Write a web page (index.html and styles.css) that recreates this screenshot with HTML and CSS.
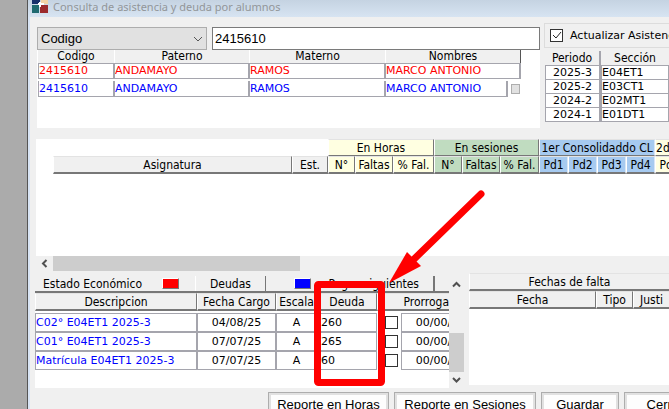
FILE: index.html
```html
<!DOCTYPE html>
<html lang="es">
<head>
<meta charset="utf-8">
<title>Consulta de asistencia y deuda por alumnos</title>
<link rel="stylesheet" href="styles.css">
</head>
<body>
<main class="window">
  <header class="titlebar">
    <svg class="logo" width="17" height="16" viewBox="0 0 17 16" aria-hidden="true">
      <path fill="#17306b" d="M0 0h8v7H0z"/><path fill="#f3d3a6" d="M9 0h7v7H9z"/>
      <path fill="#1f6a70" d="M0 8h7v8H0z"/><path fill="#9c2a2c" d="M8 8h8v8H8z"/>
      <path fill="#fff" d="M6 6h6v2H6zM7 5h2v5H7z"/>
    </svg>
    <h1>Consulta de asistencia y deuda por alumnos</h1>
  </header>

  <section class="top">
    <div class="students">
      <div class="search">
        <select class="combo" aria-label="Buscar por"><option>Codigo</option></select>
        <input class="query" type="text" value="2415610" aria-label="Valor">
      </div>
      <div class="student-list">
        <table class="student-table">
          <colgroup><col class="w77"><col class="w135"><col class="w136"><col class="w122"><col class="w13"></colgroup>
          <thead><tr><th>Codigo</th><th>Paterno</th><th>Materno</th><th colspan="2" class="last">Nombres</th></tr></thead>
          <tbody>
            <tr class="red"><td>2415610</td><td>ANDAMAYO</td><td>RAMOS</td><td colspan="2">MARCO ANTONIO</td></tr>
            <tr class="gap"><td colspan="5"></td></tr>
            <tr class="blue"><td>2415610</td><td>ANDAMAYO</td><td>RAMOS</td><td>MARCO ANTONIO</td><td class="pick"><button class="mini" type="button" aria-label="Elegir"></button></td></tr>
          </tbody>
        </table>
      </div>
    </div>
    <div class="periods">
      <label class="refresh"><input class="check" type="checkbox" checked>Actualizar Asistencia</label>
      <table class="period-table">
        <colgroup><col class="w56"><col class="w68"></colgroup>
        <thead><tr><th>Periodo</th><th>Sección</th></tr></thead>
        <tbody>
          <tr><td>2025-3</td><td>E04ET1</td></tr>
          <tr><td>2025-2</td><td>E03CT1</td></tr>
          <tr><td>2024-2</td><td>E02MT1</td></tr>
          <tr><td>2024-1</td><td>E01DT1</td></tr>
        </tbody>
      </table>
    </div>
  </section>

  <section class="courses">
    <div class="course-list">
      <table class="course-table">
        <colgroup><col class="w17"><col class="w239"><col class="w36"><col class="w27"><col class="w38"><col class="w41"><col class="w28"><col class="w38"><col class="w39"><col class="w29"><col class="w29"><col class="w29"><col class="w29"><col class="w29"></colgroup>
        <thead>
          <tr><td colspan="3"></td><th colspan="3" class="cream">En Horas</th><th colspan="3" class="green">En sesiones</th><th colspan="4" class="sky">1er Consolidaddo CL</th><th class="cream start">2do</th></tr>
          <tr><td></td><th>Asignatura</th><th>Est.</th><th class="cream">N°</th><th class="cream">Faltas</th><th class="cream">% Fal.</th><th class="green">N°</th><th class="green">Faltas</th><th class="green">% Fal.</th><th class="sky">Pd1</th><th class="sky">Pd2</th><th class="sky">Pd3</th><th class="sky">Pd4</th><th class="cream">Pd1</th></tr>
        </thead>
      </table>
    </div>
    <div class="hscroll">
      <svg width="17" height="15" viewBox="0 0 17 15" aria-hidden="true"><path d="M10.500 4L7 7.500L10.500 11" fill="none" stroke="#505050" stroke-width="2"/></svg>
      <div class="hthumb"></div>
    </div>
  </section>

  <section class="bottom">
    <div class="debts">
      <div class="debt-list">
        <div class="legend">
          <div class="legend-state">Estado Económico<span class="swatch swatch-red"></span></div>
          <div class="legend-debt">Deudas</div>
          <div class="legend-next"><span class="swatch swatch-blue"></span>Pagos siguientes</div>
          <div class="legend-rest"></div>
        </div>
        <table class="debt-table">
          <colgroup><col class="w162"><col class="w79"><col class="w41"><col class="w60"><col class="w24"><col class="w79"></colgroup>
          <thead><tr><th>Descripcion</th><th>Fecha Cargo</th><th>Escala</th><th>Deuda</th><th colspan="2">Prorrogar</th></tr></thead>
          <tbody>
            <tr><td class="desc">C02° E04ET1 2025-3</td><td>04/08/25</td><td>A</td><td class="amount">260</td><td class="tick"><input class="check" type="checkbox" aria-label="Prorrogar C02°"></td><td>00/00/00</td></tr>
            <tr><td class="desc">C01° E04ET1 2025-3</td><td>07/07/25</td><td>A</td><td class="amount">265</td><td class="tick"><input class="check" type="checkbox" aria-label="Prorrogar C01°"></td><td>00/00/00</td></tr>
            <tr><td class="desc">Matrícula E04ET1 2025-3</td><td>07/07/25</td><td>A</td><td class="amount">60</td><td class="tick"><input class="check" type="checkbox" aria-label="Prorrogar matrícula"></td><td>00/00/00</td></tr>
          </tbody>
        </table>
      </div>
      <div class="vscroll">
        <svg width="15" height="16" viewBox="0 0 15 16" aria-hidden="true"><path d="M4 10.500L7.500 7L11 10.500" fill="none" stroke="#505050" stroke-width="2"/></svg>
        <div class="vthumb"></div>
        <svg width="15" height="16" viewBox="0 0 15 16" aria-hidden="true"><path d="M4 6L7.500 9.500L11 6" fill="none" stroke="#505050" stroke-width="2"/></svg>
      </div>
      <svg class="marker" width="175" height="200" viewBox="0 0 175 200" aria-hidden="true">
        <rect x="7.500" y="94.500" width="64" height="98" rx="1" fill="none" stroke="#f00" stroke-width="7"/>
        <path d="M171 4L99 74" stroke="#f00" stroke-width="7" stroke-linecap="round"/>
        <path d="M79 93L97 62L111 76Z" fill="#f00"/>
      </svg>
    </div>
    <div class="absences">
      <table class="absence-table">
        <colgroup><col class="w127"><col class="w37"><col class="w37"></colgroup>
        <thead>
          <tr><th colspan="3">Fechas de falta</th></tr>
          <tr><th>Fecha</th><th>Tipo</th><th>Justi</th></tr>
        </thead>
      </table>
    </div>
  </section>

  <footer class="actions">
    <button class="action hours" type="button">Reporte en Horas</button>
    <button class="action sessions" type="button">Reporte en Sesiones</button>
    <button class="action save" type="button">Guardar</button>
    <button class="action close" type="button"><u>C</u>errar</button>
  </footer>
</main>
</body>
</html>
```

FILE: styles.css
```css
* { box-sizing: border-box; }

body {
  margin: 0;
  height: 100vh;
  padding-left: 27px;
  overflow: hidden;
  background: #ababab;
  color: #000;
  font: 12px/14px "DejaVu Sans Condensed", "DejaVu Sans", sans-serif;
}

.window {
  min-height: 100%;
  border-left: 1px solid #555;
  background: #f0f0f0;
  box-shadow: inset 2px 0 #d8e4f4;
  overflow: hidden;
}

.titlebar {
  display: flex;
  align-items: flex-start;
  gap: 4px;
  height: 17px;
  padding-left: 4px;
  background: linear-gradient(#c5d3e2, #d7e4f2);
}
.logo { margin-top: -3px; }
.titlebar h1 {
  margin: 0;
  color: #929699;
  font: 11px/14px "Noto Sans", "Open Sans", sans-serif;
}

table {
  border-collapse: separate;
  border-spacing: 0;
  table-layout: fixed;
}
th, td { padding: 0; overflow: hidden; white-space: nowrap; }
th {
  font-weight: normal;
  text-align: center;
  background: #f0f0f0;
}
td { font-family: "DejaVu Sans", sans-serif; }

/* Student search */
.top { display: flex; gap: 4px; padding: 6px 0 0 9px; }
.students { flex: none; width: 503px; padding-top: 4px; }
.search { display: flex; gap: 5px; height: 23px; }
.combo, .query {
  height: 23px;
  margin: 0;
  color: #000;
  font: 13px/18px "Liberation Sans", sans-serif;
  border: 1px solid #7a7a7a;
  border-radius: 0;
}
.combo {
  width: 170px;
  padding: 0 3px;
  appearance: none;
  border-color: #adadad;
  background: #e1e1e1 url("data:image/svg+xml,%3Csvg xmlns='http://www.w3.org/2000/svg' width='10' height='6'%3E%3Cpath d='M1 1l4 4 4-4' fill='none' stroke='%23555'/%3E%3C/svg%3E") right 3px center no-repeat;
}
.query { flex: 1; min-width: 0; padding: 0 2px; background: #fff; }
.student-list { height: 78px; padding-left: 1px; background: #fff; }
.student-table { width: 483px; }
.student-table th { height: 13px; line-height: 13px; border-right: 1px solid #fff; }
.student-table th.last { border-right: 1px solid #555; }
.student-table td {
  height: 16px;
  font-size: 11px;
  line-height: 14px;
  border: 1px solid #a5a5ad;
  border-right-width: 2px;
  border-left-width: 0;
}
.student-table td:first-child { border-left-width: 1px; }
.student-table .gap td { height: 2px; border: 0; }
.student-table .blue td { border-top: 0; }
.student-table .blue .pick { border: 0; padding-left: 3px; }
.red { color: #f00; }
.blue { color: #00f; }
.mini {
  display: block;
  width: 9px;
  height: 10px;
  padding: 0;
  border: 1px solid #adadad;
  background: #e1e1e1;
}

/* Periods */
.periods { flex: 1; min-width: 0; overflow: hidden; }
.refresh {
  display: flex;
  align-items: center;
  gap: 7px;
  height: 25px;
  padding-left: 5px;
  border: 1px solid #dcdcdc;
  border-right: 0;
  font: 11px/14px "DejaVu Sans", sans-serif;
  white-space: nowrap;
}
.check {
  flex: none;
  display: block;
  width: 13px;
  height: 13px;
  margin: 0;
  appearance: none;
  border: 1px solid #333;
  background: #fff;
}
.check:checked {
  background: #fff url("data:image/svg+xml,%3Csvg xmlns='http://www.w3.org/2000/svg' width='11' height='11'%3E%3Cpath d='M2 5l3 3 5-6' fill='none' stroke='%23222'/%3E%3C/svg%3E") center no-repeat;
}
.period-table { width: 124px; margin: 3px 0 0 1px; }
.period-table th { height: 14px; }
.period-table th:first-child { border-right: 2px solid #a5a5ad; }
.period-table td {
  height: 14px;
  line-height: 13px;
  font-size: 11px;
  text-align: center;
  background: #fff;
  border: 1px solid #a5a5ad;
  border-bottom-width: 0;
}
.period-table td + td { text-align: left; }
.period-table td:first-child { border-right-width: 2px; }
.period-table tr:last-child td { border-bottom-width: 1px; }

/* Courses */
.courses { margin-top: 11px; padding-left: 8px; overflow: hidden; }
.course-list { height: 117px; background: #fff; }
.course-table { width: 648px; }
.course-table th, .debt-table th, .absence-table th {
  height: 18px;
  border: 1px solid #888;
  border-width: 1px 1px 2px 1px;
  border-color: #e3e3e3 #777 #777 #fff;
}
.course-table tr:first-child th { height: 17px; border-bottom-width: 1px; }
.course-table .cream { background: #ffffe1; }
.course-table .green { background: #c0dcc0; }
.course-table .sky { background: #a6caf0; border-right-color: #d8e6f4; }
.course-table .start { text-align: left; }
.hscroll { display: flex; height: 15px; }
.hthumb { width: 247px; background: #cdcdcd; }

/* Debts */
.bottom { display: flex; gap: 5px; padding: 2px 0 0 7px; }
.debts { position: relative; flex: none; display: flex; width: 429px; height: 112px; margin-top: 3px; }
.debt-list { flex: 1; min-width: 0; overflow: hidden; background: #fff; }
.legend { display: flex; height: 17px; line-height: 16px; background: #f0f0f0; border-bottom: 2px solid #777; white-space: nowrap; }
.legend > div { flex: none; display: flex; align-items: center; border-right: 1px solid #777; }
.legend .legend-state { width: 161px; justify-content: space-between; padding: 0 16px 0 8px; border-color: #fff; }
.legend .legend-debt { width: 70px; justify-content: center; }
.legend .legend-next { width: 168px; justify-content: space-between; padding: 0 14px 0 28px; }
.swatch { width: 17px; height: 11px; border: 1px solid #777; border-top-color: #fff; border-left-color: #fff; }
.swatch-red { background: #f00; }
.swatch-blue { background: #00f; }
.debt-table { width: 445px; }
.debt-table td {
  height: 19px;
  font-size: 11px;
  line-height: 14px;
  text-align: center;
  border: 1px solid #a5a5ad;
}
.debt-table tbody::before { content: ""; display: block; height: 2px; }
.debt-table .desc { color: #00f; text-align: left; }
.debt-table .amount { padding-left: 3px; text-align: left; }
.debt-table .tick { padding-left: 8px; border: 0; }
.vscroll { display: flex; flex-direction: column; width: 15px; }
.vthumb { height: 39px; margin-top: auto; background: #cdcdcd; }

/* Annotation drawn over the debt column */
.marker { position: absolute; left: 275px; top: -86px; pointer-events: none; }

/* Absences */
.absences { flex: 1; min-width: 0; height: 112px; overflow: hidden; background: #fff; }
.absence-table { width: 100%; }

/* Actions */
.actions { display: flex; gap: 5px; padding: 4px 0 0 240px; }
.action {
  flex: none;
  height: 25px;
  padding: 0;
  color: #000;
  font: 13px/14px "Liberation Sans", sans-serif;
  background: #fdfdfd;
  border: 1px solid #adadad;
  box-shadow: inset 0 0 0 2px #e1e1e1;
}
.hours { width: 121px; }
.sessions { width: 142px; }
.save { width: 78px; }
.close { width: 82px; }

/* Column widths */
.w13 { width: 13px; } .w17 { width: 17px; } .w24 { width: 24px; }
.w27 { width: 27px; } .w28 { width: 28px; } .w29 { width: 29px; }
.w36 { width: 36px; } .w37 { width: 37px; } .w38 { width: 38px; }
.w39 { width: 39px; } .w41 { width: 41px; } .w56 { width: 56px; }
.w60 { width: 60px; } .w68 { width: 68px; } .w77 { width: 77px; }
.w79 { width: 79px; } .w122 { width: 122px; } .w127 { width: 127px; }
.w135 { width: 135px; } .w136 { width: 136px; } .w162 { width: 162px; }
.w239 { width: 239px; }
```
